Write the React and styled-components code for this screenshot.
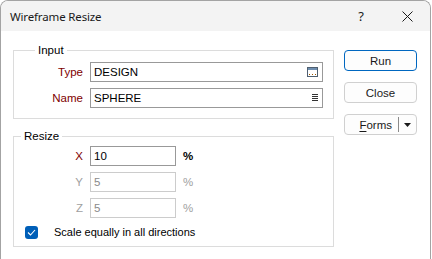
import React from "react";
import styled, { createGlobalStyle } from "styled-components";

const Global = createGlobalStyle`
  html, body { margin: 0; padding: 0; background: #ffffff; }
  body { font-family: "Liberation Sans", Arial, sans-serif; font-size: 11px; color: #000; }
  * { box-sizing: border-box; }
`;

const Window = styled.div`
  width: 431px;
  height: 259px;
  border: 1px solid #a3a3a3;
  border-bottom: none;
  border-radius: 8px 8px 0 0;
  overflow: hidden;
  background: #ffffff;
  display: flex;
  flex-direction: column;
`;

const TitleBar = styled.div`
  height: 30px;
  background: #f3f3f3;
  display: flex;
  align-items: center;
  padding-left: 9px;
`;

const Title = styled.div`
  flex: 1;
  font-family: "Noto Sans", sans-serif;
  font-size: 11.5px;
  letter-spacing: -0.15px;
  color: #1a1a1a;
`;

const TitleButton = styled.div`
  width: 46px;
  height: 30px;
  display: flex;
  align-items: center;
  justify-content: center;
  font-family: "Noto Sans", sans-serif;
  font-size: 13px;
  color: #1a1a1a;
`;

const Body = styled.div`
  display: flex;
  gap: 10px;
  padding: 11px 0 0 12px;
`;

const LeftCol = styled.div`
  display: flex;
  flex-direction: column;
  gap: 9px;
`;

const Group = styled.fieldset`
  margin: 0;
  width: 321px;
  border: 1px solid #dcdcdc;
  padding: ${(p) => p.$pad};
  min-width: 0;
`;

const Legend = styled.legend`
  padding: 0 3px;
  margin-left: 7px;
  line-height: 16px;
  height: 16px;
  font-size: 11.5px;
  color: #000;
`;

const Grid = styled.div`
  display: grid;
  grid-template-columns: 55px ${(p) => p.$w}px auto;
  column-gap: 7px;
  row-gap: 6px;
  align-items: center;
`;

const Label = styled.div`
  text-align: right;
  font-size: 11.5px;
  color: ${(p) => (p.$disabled ? "#a0a0a0" : "#800000")};
  line-height: 20px;
`;

const Field = styled.div`
  height: 20px;
  border: 1px solid ${(p) => (p.$disabled ? "#cccccc" : "#999999")};
  background: #fff;
  display: flex;
  align-items: center;
  padding: 0 4px 0 3px;
  font-size: 11.5px;
  color: ${(p) => (p.$disabled ? "#8a8a8a" : "#000")};
`;

const FieldText = styled.span`
  flex: 1;
`;

const Unit = styled.div`
  font-size: 11.5px;
  font-weight: ${(p) => (p.$disabled ? 400 : 700)};
  color: ${(p) => (p.$disabled ? "#a0a0a0" : "#000")};
`;

const CheckRow = styled.div`
  display: flex;
  align-items: center;
  height: 20px;
  margin-top: 4px;
  padding-left: 11px;
  gap: 16px;
`;

const CheckText = styled.span`
  font-size: 11px;
`;

const CheckBox = styled.div`
  width: 13px;
  height: 13px;
  border-radius: 3px;
  background: #005fb8;
  display: flex;
  align-items: center;
  justify-content: center;
`;

const RightCol = styled.div`
  display: flex;
  flex-direction: column;
  gap: 11px;
  padding-top: 8px;
`;

const Button = styled.div`
  width: 73px;
  height: 21px;
  border-radius: 4px;
  border: 1px solid ${(p) => (p.$primary ? "#0067c0" : "#d0d0d0")};
  background: #fdfdfd;
  display: flex;
  align-items: center;
  justify-content: center;
  font-size: 11.5px;
  color: #1a1a1a;
`;

const SplitButton = styled(Button)`
  justify-content: flex-end;
  padding-right: 5px;
`;

const Underlined = styled.span`
  text-decoration: underline;
  text-underline-offset: 2px;
`;

const Sep = styled.div`
  width: 1px;
  height: 15px;
  background: #8a8a8a;
  margin: 0 5px 0 6px;
`;

const TypeIcon = () => (
  <svg width="11" height="10" viewBox="0 0 11 10">
    <rect x="0.5" y="0.5" width="10" height="9" fill="#fff" stroke="#4f5f70" />
    <rect x="1" y="1" width="9" height="2" fill="#6f8fb0" />
    <rect x="2" y="7" width="1" height="1" fill="#a05a00" />
    <rect x="5" y="7" width="1" height="1" fill="#a05a00" />
    <rect x="8" y="7" width="1" height="1" fill="#a05a00" />
  </svg>
);

const ListIcon = () => (
  <svg width="6" height="8" viewBox="0 0 6 8">
    {[0, 2, 4, 6].map((y) => (
      <rect key={y} x="0" y={y} width="6" height="1" fill="#333" />
    ))}
  </svg>
);

export default function App() {
  return (
    <>
      <Global />
      <Window>
        <TitleBar>
          <Title>Wireframe Resize</Title>
          <TitleButton>?</TitleButton>
          <TitleButton>
            <svg width="11" height="11" viewBox="0 0 11 11">
              <path d="M0.5 0.5 L10.5 10.5 M10.5 0.5 L0.5 10.5" stroke="#1a1a1a" strokeWidth="1" />
            </svg>
          </TitleButton>
        </TitleBar>
        <Body>
          <LeftCol>
            <Group $pad="4px 10px 10px 14px">
              <Legend>Input</Legend>
              <Grid $w={233}>
                <Label>Type</Label>
                <Field>
                  <FieldText>DESIGN</FieldText>
                  <TypeIcon />
                </Field>
                <span />
                <Label>Name</Label>
                <Field>
                  <FieldText>SPHERE</FieldText>
                  <ListIcon />
                </Field>
                <span />
              </Grid>
            </Group>
            <Group $pad="2px 10px 4px 0">
              <Legend>Resize</Legend>
              <div style={{ paddingLeft: 14 }}>
                <Grid $w={86}>
                  <Label>X</Label>
                  <Field>
                    <FieldText>10</FieldText>
                  </Field>
                  <Unit>%</Unit>
                  <Label $disabled>Y</Label>
                  <Field $disabled>
                    <FieldText>5</FieldText>
                  </Field>
                  <Unit $disabled>%</Unit>
                  <Label $disabled>Z</Label>
                  <Field $disabled>
                    <FieldText>5</FieldText>
                  </Field>
                  <Unit $disabled>%</Unit>
                </Grid>
              </div>
              <CheckRow>
                <CheckBox>
                  <svg width="9" height="7" viewBox="0 0 9 7">
                    <path d="M1 3.5 L3.5 6 L8 1" stroke="#fff" strokeWidth="1.1" fill="none" />
                  </svg>
                </CheckBox>
                <CheckText>Scale equally in all directions</CheckText>
              </CheckRow>
            </Group>
          </LeftCol>
          <RightCol>
            <Button $primary>Run</Button>
            <Button>Close</Button>
            <SplitButton>
              <span>
                <Underlined>F</Underlined>orms
              </span>
              <Sep />
              <svg width="7" height="4" viewBox="0 0 7 4">
                <path d="M0 0 H7 L3.5 4 Z" fill="#1a1a1a" />
              </svg>
            </SplitButton>
          </RightCol>
        </Body>
      </Window>
    </>
  );
}
